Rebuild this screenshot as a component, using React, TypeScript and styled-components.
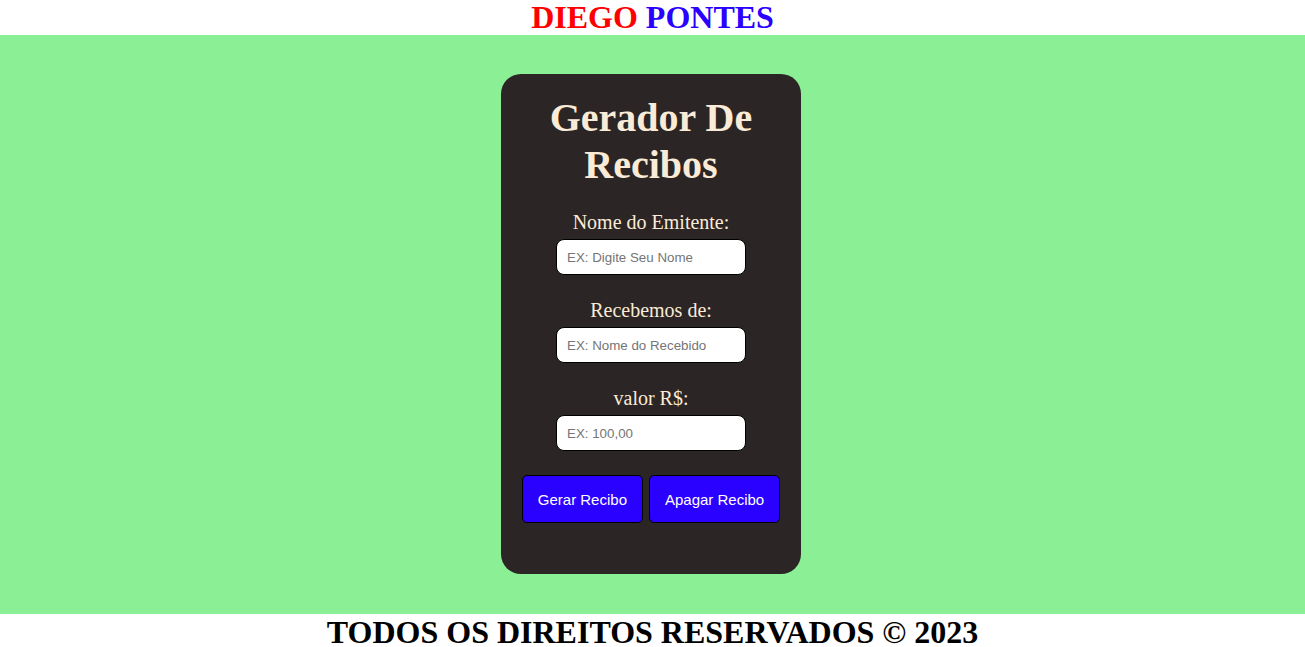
import React from "react";
import styled, { createGlobalStyle } from "styled-components";

const GlobalStyle = createGlobalStyle`
  body {
    margin: 0;
    font-family: "Liberation Serif", "Times New Roman", serif;
  }
`;

const Header = styled.header`
  background: white;
  text-align: center;
`;

const Brand = styled.h1`
  margin: 0;
  font-size: 32px;
  line-height: 35px;
  font-weight: bold;
`;

const BrandWord = styled.span<{ $color: string }>`
  color: ${({ $color }) => $color};
`;

const Main = styled.main`
  background: #8bf095;
  padding: 39px 0 40px;
  display: flex;
  justify-content: center;
`;

const Card = styled.section`
  width: 300px;
  height: 500px;
  box-sizing: border-box;
  background: #2b2525;
  border-radius: 20px;
  padding-top: 20px;
  display: flex;
  flex-direction: column;
  align-items: center;
  margin-right: 3px;
`;

const Title = styled.h2`
  margin: 0;
  font-size: 40px;
  font-weight: bold;
  color: antiquewhite;
  text-align: center;
  width: 240px;
`;

const Label = styled.label`
  display: block;
  margin-top: 24px;
  font-size: 20px;
  color: antiquewhite;
  text-align: center;

  &:first-of-type {
    margin-top: 23px;
  }
`;

const Input = styled.input`
  margin-top: 5px;
  width: 190px;
  height: 36px;
  box-sizing: border-box;
  padding: 0 10px;
  border: 1px solid #000;
  border-radius: 8px;
  background: white;
  font-family: "Liberation Sans", Arial, sans-serif;
  font-size: 13.33px;
  &::placeholder {
    color: #757575;
  }
`;

const Buttons = styled.div`
  display: flex;
  gap: 6px;
  margin-top: 24px;
`;

const Button = styled.button`
  height: 48px;
  padding: 0 15px;
  background: #2a00ff;
  color: white;
  border: 1px solid #000;
  border-radius: 5px;
  font-family: "Liberation Sans", Arial, sans-serif;
  font-size: 15px;
`;

const Footer = styled.footer`
  background: white;
  text-align: center;
`;

const FooterText = styled.h2`
  margin: 0;
  font-size: 32px;
  font-weight: bold;
`;

const fields = [
  { label: "Nome do Emitente:", placeholder: "EX: Digite Seu Nome" },
  { label: "Recebemos de:", placeholder: "EX: Nome do Recebido" },
  { label: "valor R$:", placeholder: "EX: 100,00" },
];

const App: React.FC = () => {
  return (
    <>
      <GlobalStyle />
      <Header>
        <Brand>
          <BrandWord $color="#ff0000">DIEGO</BrandWord>{" "}
          <BrandWord $color="#2a00ff">PONTES</BrandWord>
        </Brand>
      </Header>
      <Main>
        <Card>
          <Title>Gerador De Recibos</Title>
          {fields.map((f) => (
            <React.Fragment key={f.label}>
              <Label>{f.label}</Label>
              <Input placeholder={f.placeholder} />
            </React.Fragment>
          ))}
          <Buttons>
            <Button>Gerar Recibo</Button>
            <Button>Apagar Recibo</Button>
          </Buttons>
        </Card>
      </Main>
      <Footer>
        <FooterText>TODOS OS DIREITOS RESERVADOS © 2023</FooterText>
      </Footer>
    </>
  );
};

export default App;
